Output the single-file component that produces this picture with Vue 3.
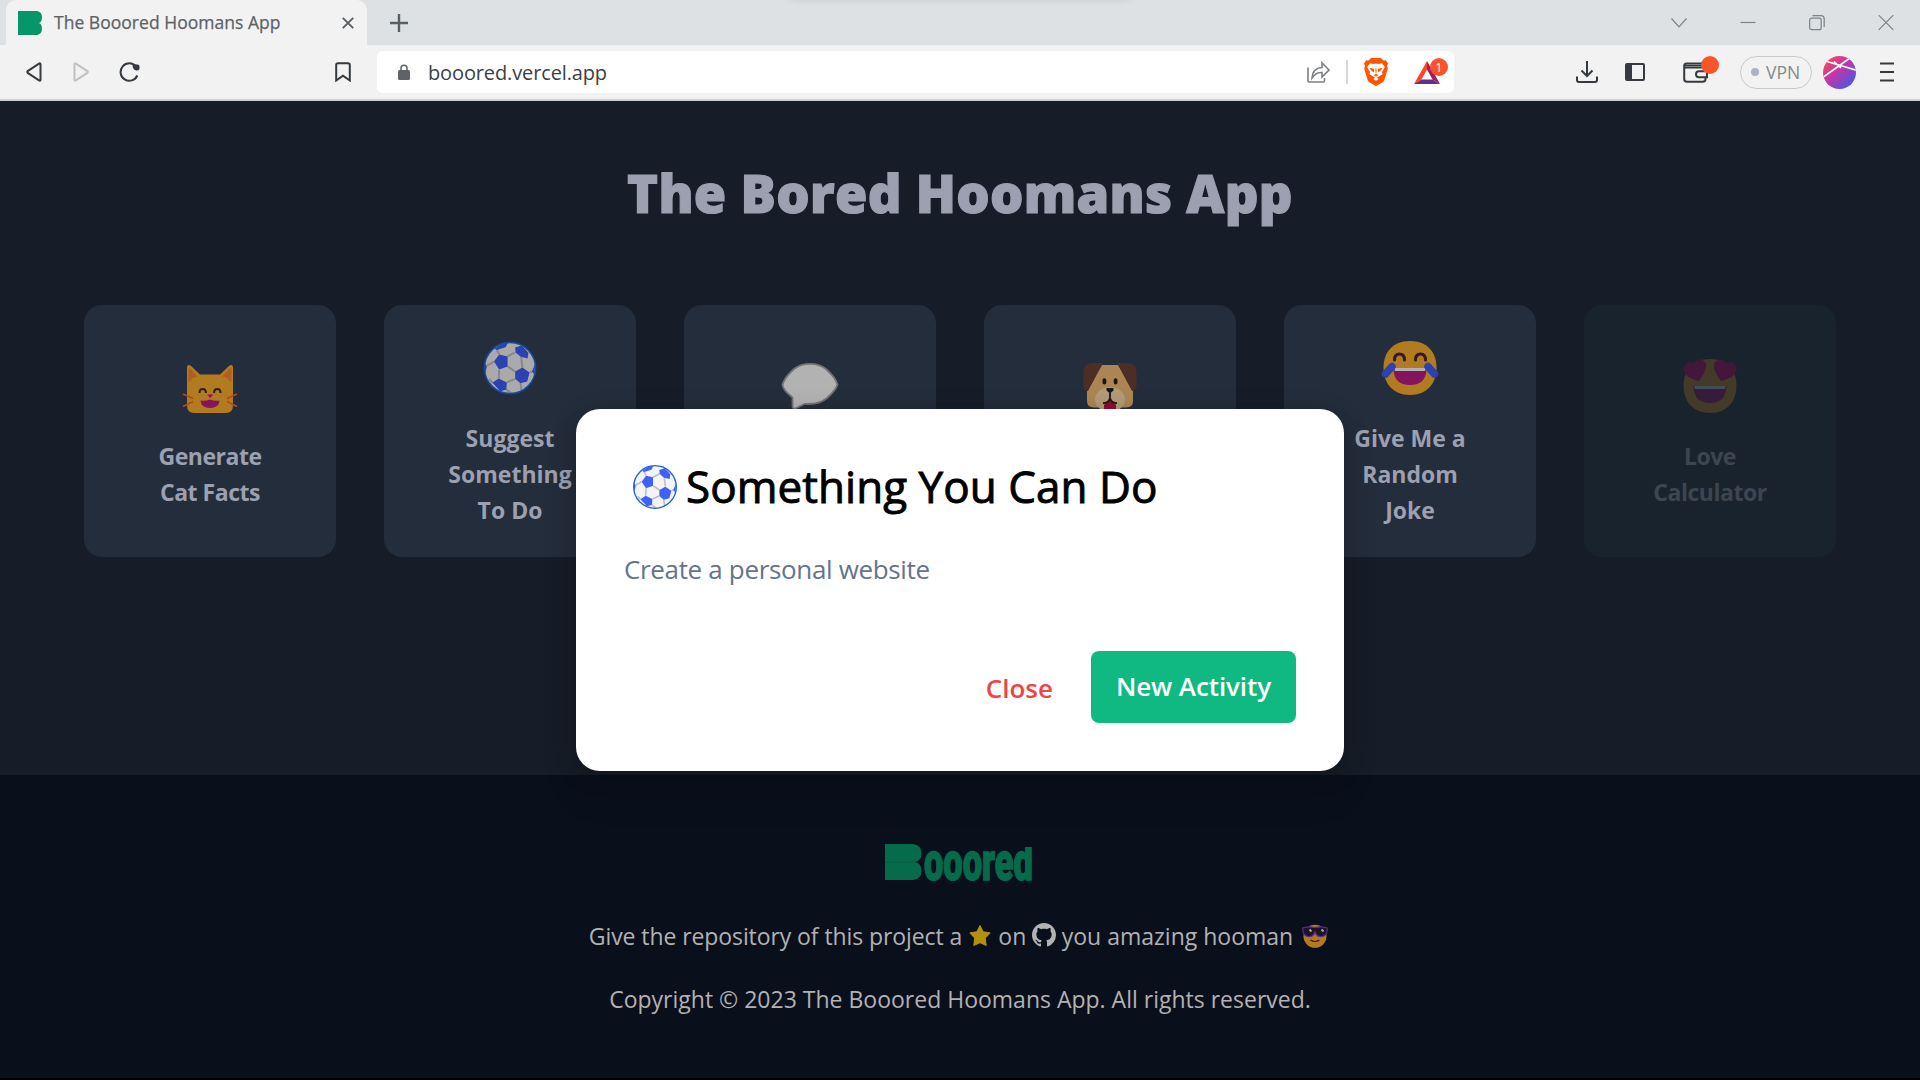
<script setup>
const cards = [
  { icon: 'cat', lines: ['Generate', 'Cat Facts'], tight: true },
  { icon: 'ball', lines: ['Suggest', 'Something', 'To Do'] },
  { icon: 'bubble', lines: [] },
  { icon: 'dog', lines: [] },
  { icon: 'joy', lines: ['Give Me a', 'Random', 'Joke'] },
  { icon: 'love', lines: ['Love', 'Calculator'], soon: true, tight: true },
]
</script>

<template>
  <div class="screen">
    <header class="browser">
      <div class="tabs">
        <div class="tab">
          <svg class="favicon" viewBox="0 0 24 24"><path d="M0 0h19q5 1 5 6t-3 6q3 1 3 6t-5 6H0z" fill="#059669" /></svg>
          <span class="tab-title">The Booored Hoomans App</span>
          <svg class="tab-x" viewBox="0 0 12 12"><path d="M.8.8l10.400 10.400M11.200.8L.8 11.200" stroke="#5a5f64" stroke-width="1.900" /></svg>
        </div>
        <svg class="plus" viewBox="0 0 18 18"><path d="M9 0v18M0 9h18" stroke="#5a5f64" stroke-width="2.400" /></svg>
        <span class="top-shade"></span>
        <div class="win">
          <svg viewBox="0 0 16 16"><path d="M.5 3.500L8 11.800 15.500 3.500" /></svg>
          <svg viewBox="0 0 16 16"><path d="M.5 7.500h15" /></svg>
          <svg viewBox="0 0 16 16"><rect x=".7" y="3.200" width="11.500" height="11.500" rx="2" /><path d="M3.500 .7H12a3.200 3.200 0 0 1 3.200 3.200V12" /></svg>
          <svg viewBox="0 0 16 16"><path d="M.7.2l14.600 14.600M15.300.2L.7 14.800" /></svg>
        </div>
      </div>
      <div class="toolbar">
        <svg class="i back" viewBox="0 0 16 20"><path d="M14.500 2.300v15.400q0 1.600-1.500.7L1.700 10.900q-1-.9 0-1.800L13 1.600q1.500-.9 1.500.7z" /></svg>
        <svg class="i fwd" viewBox="0 0 16 20"><path d="M1.500 2.300v15.400q0 1.600 1.500.7l11.300-7.500q1-.9 0-1.800L3 1.600Q1.500.7 1.500 2.300z" /></svg>
        <svg class="i reload" viewBox="0 0 21 20"><path d="M17 4.500A8.700 8.700 0 1 0 18.300 13.500" /><path d="M13.500 2.500h5q2 0 2 2V7q-1 2-3 1.500-4-.5-4-6z" fill="#343a40" stroke="none" /></svg>
        <svg class="i mark" viewBox="0 0 16 20"><path d="M1.200 3q0-1.800 1.800-1.800h10q1.800 0 1.800 1.800v15.500L8 13.800l-6.800 4.700z" /></svg>
        <div class="url">
          <svg class="lock" viewBox="0 0 12 16"><path d="M3 7V4.200a3 3 0 0 1 6 0V7" fill="none" stroke="#5f6368" stroke-width="1.500" /><rect y="6" width="12" height="10" rx="1.500" fill="#5f6368" /></svg>
          <span class="host">booored.vercel.app</span>
          <svg class="share" viewBox="0 0 23 22"><path d="M1 6.500V20q0 1 1 1h14.500q1 0 1-1v-3" /><path d="M5 17q.5-10 10-10.500V1.800L22 9l-7 7v-4.500Q9 11 5 17z" /></svg>
          <i class="sep"></i>
          <svg class="brave" viewBox="0 0 24 28"><path d="M7 0h10l2.500 2.600 2.300-.4L24 5.600 23 8l.8 2.500-3.400 11.400q-.6 1.700-2 2.700L12 28l-6.400-3.400q-1.400-1-2-2.700L.2 10.500 1 8 0 5.600l2.200-3.400 2.300.4z" fill="#ff5500" /><path d="M12 5.500l2.500.5 3.500-.8 2.800 3.800-1 2-1.800 3 .6 2.300-4.300 2.400-1.400 1.100 1.700 1.300L12 22.800l-2.600-1.700 1.700-1.300-1.400-1.100-4.300-2.400.6-2.300-1.800-3-1-2L6 5.200l3.500.8z" fill="#fff" /><path d="M5.500 10l3.800.5 1 1-.5 2.800-1.700-1zM18.500 10l-3.800.5-1 1 .5 2.800 1.700-1zM12 8l.6 4.500-.3 3h-.6l-.3-3zM9.500 17L12 16.100l2.500.9L12 18.500z" fill="#ff5500" /></svg>
          <div class="bat">
            <svg viewBox="0 0 26 23"><path d="M13 0L0 23l7.500-4.500L13 8.500z" fill="#ff4724" /><path d="M13 0v8.500l5.500 10L26 23z" fill="#9e1f63" /><path d="M0 23h26l-7.500-4.500h-11z" fill="#662d91" /></svg>
            <b>1</b>
          </div>
        </div>
        <div class="tools">
          <svg class="i dl" viewBox="0 0 22 22"><path d="M11 0v14.500M5.500 9.500L11 15l5.500-5.500M1 15.500V19q0 2 2 2h16q2 0 2-2v-3.500" /></svg>
          <svg class="i side" viewBox="0 0 20 18"><rect x="1" y="1" width="18" height="16" rx="1" /><path d="M1 1h6v16H1z" fill="#343a40" stroke="none" /></svg>
          <div class="wallet">
            <svg class="i" viewBox="0 0 25 21"><path d="M22.500 5V4q0-2.500-2.500-2.500H3.500Q1.200 1.500 1.200 4v13q0 2.800 2.800 2.800h15.700q2.800 0 2.800-2.800v-1.500M1.200 5.500h19q2.300 0 2.300 3" /><path d="M24 9.200h-8q-3 0-3 3t3 3h8z" /><path d="M2 3.500h18" stroke-width="1.500" /></svg>
            <b></b>
          </div>
          <div class="vpn"><i></i><span>VPN</span></div>
          <svg class="avatar" viewBox="0 0 33 33"><defs><linearGradient id="av" x1=".1" y1=".1" x2=".85" y2=".9"><stop offset="0" stop-color="#f5485f" /><stop offset=".45" stop-color="#c137a8" /><stop offset="1" stop-color="#4a58e4" /></linearGradient><clipPath id="avc"><circle cx="16.500" cy="16.500" r="16.500" /></clipPath></defs><g clip-path="url(#avc)"><path d="M0 0h33v33H0z" fill="url(#av)" /><path d="M4 5.500l30 9M-1 22L27 2M11 5.500l7 6.500" stroke="#fff" stroke-width="1.600" /></g></svg>
          <svg class="i menu" viewBox="0 0 14 20"><path d="M0 1.500h14M0 10h14M0 18.500h14" stroke-width="2.200" /></svg>
        </div>
      </div>
    </header>

    <main class="page">
      <h1>The Bored Hoomans App</h1>
      <div class="cards">
        <div v-for="c in cards" :key="c.icon" class="card" :class="{ soon: c.soon, tight: c.tight }">
          <svg v-if="c.icon === 'cat'" class="emoji" viewBox="0 0 60 60">
            <path d="M7 12q0-4 3.500-2.500L20 18.500h20l9.500-9Q53 8 53 12v37q0 8-7 8H14q-7 0-7-8z" fill="#b27b20" />
            <path d="M8.500 13q1-1.500 2.500 0l6.500 7.500q-6 1-7 5h-2zM51.500 13q-1-1.500-2.500 0l-6.500 7.500q6 1 7 5h2z" fill="#b25e20" />
            <path d="M19.500 37q0-4 3.200-4t3.200 4M34.100 37q0-4 3.200-4t3.200 4" fill="none" stroke="#321b28" stroke-width="2" />
            <path d="M27 38.500h6.500L30.200 42z" fill="#b2006c" />
            <path d="M20.500 44.500q5 .8 9.500-1 4.500 1.800 9.500 1Q39 52 30 52t-9.500-7.500z" fill="#83145d" />
            <path d="M3 38l10 4.500M3 50.500l10-5M57 38l-10 4.500M57 50.500l-10-5" stroke="#b34a1c" stroke-width="1.600" />
          </svg>
          <svg v-else-if="c.icon === 'bubble'" class="emoji" viewBox="0 0 60 60"><path d="M12.500 41.500Q2.500 33.500 2.500 28.500 4.500 21.500 14 13 20.500 7.800 30 7.800T46 13q9.500 8.500 11.500 15.500-1.500 5.500-10.500 13.500-8 7-22 5.800l-9.500 4.700q-3 .5-3-2.500z" fill="#b2b2b2" stroke="#737373" stroke-width="1.800" /></svg>
          <svg v-else-if="c.icon === 'dog'" class="emoji" viewBox="0 0 60 60">
            <path d="M22 9h16l15 24v12q0 6.500-7 6.500H14q-7 0-7-6.500V33z" fill="#ab8654" />
            <path d="M12 7h11L8 35Q3.500 35 3.500 31V17Q3.500 7 12 7zM48 7H37l15 28q4.500 0 4.500-4V17Q56.500 7 48 7z" fill="#4c2e26" />
            <ellipse cx="30" cy="43.500" rx="15" ry="12.500" fill="#b29b76" />
            <rect x="22.500" y="22.200" width="3.800" height="6.200" rx="1.900" fill="#191919" /><rect x="33.700" y="22.200" width="3.800" height="6.200" rx="1.900" fill="#191919" />
            <path d="M26.500 32h7v2.500L30 37.500l-3.500-3z" fill="#191919" /><path d="M24 49l6-6.500 6 6.500v9H24z" fill="#930832" />
            <path d="M30 37v5q-1.500 5.500-7 5M30 42q1.500 5.500 7 5" fill="none" stroke="#191919" stroke-width="1.800" />
          </svg>
          <svg v-else-if="c.icon === 'joy'" class="emoji" viewBox="0 0 60 60">
            <path d="M30 3c18 0 26.500 12 26.500 27S47 57 30 57 3.500 45 3.500 30 12 3 30 3z" fill="#b27b20" />
            <path d="M14.500 22q0-6 5-6t5 6M35.500 22q0-6 5-6t5 6" fill="none" stroke="#321b28" stroke-width="3" stroke-linecap="round" />
            <path d="M13.500 31h33Q46 47 30 47T13.500 31z" fill="#83145d" /><path d="M14.500 30h31v1.500q0 1.500-1.500 1.500H16q-1.500 0-1.500-1.500z" fill="#b2b2b2" />
            <path d="M12 28.500L5.500 36M48 28.500l6.500 7.500" stroke="#2c41b2" stroke-width="7.500" stroke-linecap="round" />
          </svg>
          <svg v-else-if="c.icon === 'love'" class="emoji" viewBox="0 0 60 60">
            <path d="M30 3c18 0 26.500 12 26.500 27S47 57 30 57 3.500 45 3.500 30 12 3 30 3z" fill="#443a2a" />
            <path d="M13.500 30h33Q46 47 30 47T13.500 30z" fill="#371b3b" /><path d="M14.500 30h31v1.500q0 1.500-1.500 1.500H16q-1.500 0-1.500-1.500z" fill="#444d55" />
            <path d="M19 25Q3 21 3.500 12.500 5 5 13.500 7 18 1 24 5q6 5-5 20z" fill="#43163b" /><path d="M41 25q16-4 15.500-12.500Q55 5 46.500 7 42 1 36 5q-6 5 5 20z" fill="#43163b" />
          </svg>
          <svg v-else class="emoji ball" viewBox="-9 -9 150 150">
            <circle class="w" cx="66" cy="66" r="64" />
            <path class="s" d="M60 37l19-10M60 62l19 13M39 32l-6-12M26 50L5 62M39 70l-1 22M58 102l21-9M94 38l3 27M115 77l12-4M92 104l3 18M57 120l12 9M22 103l-8-10" />
            <path class="p" d="M26 50l13-18 21 5v25l-21 8zM79 75l18-10 18 12-6 23-17 4-13-11zM79 15l16-5 17 18-2 14-17-4-13-11zM22 103l16-11 20 10-1 18-15 4zM28 18Q42 5 61 3l-6 11-22 7zM129 55l-8 20 6 8zM3 52l5 12-5 18z" />
            <circle class="r" cx="66" cy="66" r="64" />
          </svg>
          <p class="label"><template v-for="l in c.lines" :key="l"><span>{{ l }}</span><br></template></p>
        </div>
      </div>
    </main>

    <footer class="foot">
      <div class="logo">
        <svg class="logo-b" viewBox="0 0 37 36"><path d="M0 0h28q8.500 1 8.500 9T30 18q6.500 1 6.500 9T28 36H0z" fill="#056b4b" /><path d="M0 18.300h31" stroke="#045a42" stroke-width=".8" /></svg>
        <svg class="logo-t" viewBox="0 0 109 34"><text x="0" y="32.500" textLength="109" lengthAdjust="spacingAndGlyphs">ooored</text></svg>
      </div>
      <p class="line">
        <span class="give">Give the repository of this project a</span>
        <svg class="star" viewBox="0 0 22 21"><path d="M11 .5l3.200 6.200 7 1.200-4.900 5.200.9 7.400L11 17.700l-6.200 2.800.9-7.400L.8 7.900l7-1.200z" fill="#b29010" stroke="#b29010" stroke-linejoin="round" /></svg>
        <span class="on">on</span>
        <svg class="gh" viewBox="0 0 16 16"><path fill="#b2b2b2" d="M8 0C3.580 0 0 3.580 0 8c0 3.540 2.290 6.530 5.470 7.590.4.070.55-.17.55-.38 0-.19-.01-.82-.01-1.490-2.010.37-2.530-.49-2.690-.94-.09-.23-.48-.94-.82-1.130-.28-.15-.68-.52-.01-.53.63-.01 1.080.58 1.230.82.72 1.210 1.870.87 2.330.66.070-.52.28-.87.51-1.070-1.780-.2-3.640-.89-3.640-3.950 0-.87.31-1.590.82-2.150-.08-.2-.36-1.020.08-2.120 0 0 .67-.21 2.200.82.64-.18 1.320-.27 2-.27s1.360.09 2 .27c1.530-1.040 2.200-.82 2.200-.82.44 1.100.16 1.920.08 2.120.51.56.82 1.270.82 2.150 0 3.070-1.870 3.750-3.650 3.950.29.25.54.73.54 1.480 0 1.070-.01 1.930-.01 2.200 0 .21.150.46.550.38A8.010 8.010 0 0 0 16 8c0-4.420-3.580-8-8-8z" /></svg>
        <span class="you">you amazing hooman</span>
        <svg class="cool" viewBox="0 0 26 24"><circle cx="13" cy="12.300" r="11.500" fill="#b27b20" /><path d="M.8 4q6-1.800 12.200-.5Q19 2.200 25.200 4q.6 8-6 8.700-5 .3-6.200-5.200-1.200 5.500-6.200 5.200Q.2 12 .8 4z" fill="#1f1228" stroke="#54308a" stroke-width="1.200" /><path d="M7.500 5.500l2 2M19.500 5.500l2 2" stroke="#b0a8ba" stroke-width="1.800" /><path d="M8.500 16q4.500 3 9 0" fill="none" stroke="#321b28" stroke-width="1.200" /></svg>
      </p>
      <p class="line copy">Copyright © 2023 The Booored Hoomans App. All rights reserved.</p>
    </footer>

    <section class="modal">
      <h2>
        <svg class="ball big" viewBox="0 0 132 132">
          <circle class="w" cx="66" cy="66" r="64" />
          <path class="s" d="M60 37l19-10M60 62l19 13M39 32l-6-12M26 50L5 62M39 70l-1 22M58 102l21-9M94 38l3 27M115 77l12-4M92 104l3 18M57 120l12 9M22 103l-8-10" />
          <path class="p" d="M26 50l13-18 21 5v25l-21 8zM79 75l18-10 18 12-6 23-17 4-13-11zM79 15l16-5 17 18-2 14-17-4-13-11zM22 103l16-11 20 10-1 18-15 4zM28 18Q42 5 61 3l-6 11-22 7zM129 55l-8 20 6 8zM3 52l5 12-5 18z" />
          <circle class="r" cx="66" cy="66" r="64" />
        </svg>
        <span>Something You Can Do</span>
      </h2>
      <p class="msg">Create a personal website</p>
      <div class="acts">
        <button class="close">Close</button>
        <button class="new">New Activity</button>
      </div>
    </section>
  </div>
</template>

<style>
body { margin: 0; background: #000; }
</style>

<style scoped>
.screen { position: relative; width: 1920px; height: 1080px; overflow: hidden; background: #000; font-family: "Open Sans", "Noto Sans", sans-serif; display: flex; flex-direction: column; }
svg { display: block; flex: none; }
p, h1, h2 { margin: 0; }
span { white-space: nowrap; }
.browser { height: 101px; box-sizing: border-box; background: #f2f2f2; border-bottom: 2px solid #cdd2d5; }
.tabs { height: 45px; background: #dde1e4; display: flex; align-items: center; position: relative; }
.tab { width: 361px; height: 45px; margin-left: 6px; background: #f2f2f2; border-radius: 10px 10px 0 0; display: flex; align-items: center; box-sizing: border-box; padding: 0 12px; }
.favicon { width: 24px; height: 24px; }
.tab-title { margin-left: 12px; font-size: 17.5px; letter-spacing: .03px; color: #5d6267; -webkit-text-stroke: .25px #5d6267; flex: 1; padding-bottom: 1px; }
.tab-x { width: 12px; height: 12px; margin-right: 1px; }
.plus { width: 18px; height: 18px; margin-left: 23px; }
.top-shade { position: absolute; left: 790px; top: -6px; width: 340px; height: 4px; box-shadow: 0 0 8px rgba(0, 0, 0, .2); }
.win { margin-left: auto; margin-right: 26px; display: flex; gap: 53px; }
.win svg { width: 16px; height: 16px; fill: none; stroke: #7d8286; stroke-width: 1.2; }
.toolbar { height: 54px; display: flex; align-items: center; }
.i { fill: none; stroke: #343a40; stroke-width: 2; }
.back { width: 16px; height: 20px; margin-left: 26px; }
.fwd { width: 16px; height: 20px; margin-left: 31px; stroke: #bfc1c3; }
.reload { width: 21px; height: 20px; margin-left: 30px; }
.mark { width: 16px; height: 20px; margin-left: 195px; }
.url { width: 1077px; height: 42px; background: #fff; border-radius: 6px; margin-left: 26px; display: flex; align-items: center; box-sizing: border-box; padding-left: 21px; }
.lock { width: 12px; height: 16px; }
.host { font-size: 20px; letter-spacing: -.13px; color: #3b3f44; margin-left: 18px; flex: 1; }
.share { width: 23px; height: 22px; fill: none; stroke: #7c8084; stroke-width: 1.6; }
.sep { width: 2px; height: 24px; background: #d5d7d9; margin: 0 16px; }
.brave { width: 24px; height: 28px; }
.bat { position: relative; margin: 0 14px 0 26px; }
.bat svg { width: 26px; height: 23px; }
.bat b { position: absolute; left: 16px; top: -3px; width: 18px; height: 18px; border-radius: 9px; background: #fb542b; color: #fff; font-size: 12px; font-weight: 400; line-height: 19px; text-align: center; }
.tools { flex: 1; display: flex; align-items: center; padding-left: 122px; }
.dl { width: 22px; height: 22px; }
.side { width: 20px; height: 18px; margin-left: 27px; }
.wallet { position: relative; margin-left: 38px; }
.wallet svg { width: 25px; height: 21px; }
.wallet b { position: absolute; left: 18px; top: -6px; width: 18px; height: 18px; border-radius: 9px; background: #fb542b; }
.vpn { margin-left: 32px; width: 72px; height: 33px; box-sizing: border-box; border: 1px solid #c6cace; border-radius: 17px; display: flex; align-items: center; padding-left: 10px; font-size: 17.5px; color: #84898f; }
.vpn i { width: 8px; height: 8px; border-radius: 4px; background: #aeb1c4; margin-right: 7px; }
.avatar { width: 33px; height: 33px; margin-left: 11px; }
.menu { width: 14px; height: 20px; margin-left: 24px; }

.page { height: 674px; background: #161d28; }
h1 { box-sizing: border-box; padding-top: 57px; height: 204px; line-height: 70px; text-align: center; font-size: 52.5px; font-weight: 800; letter-spacing: .3px; color: #9ca0b0; -webkit-text-stroke: 1.2px #9ca0b0; }
.cards { display: flex; gap: 48px; padding: 0 84px; }
.card { width: 252px; height: 252px; border-radius: 18px; background: #242d3b; display: flex; flex-direction: column; align-items: center; justify-content: center; }
.emoji { width: 60px; height: 60px; margin: 4px 0 22px; }
.label { min-height: 72px; text-align: center; font-size: 23px; font-weight: 700; line-height: 36px; color: #9ca0b0; }
.tight .label { letter-spacing: -.48px; }
.soon { background: #19232d; }
.soon .label { color: #3d4650; }
.ball { --w: #aaa; --s: #888; --p: #2c41b2; --r: #14499c; }
.ball.big { --w: #f4f4f4; --s: #c0c0c0; --p: #3f5fff; --r: #1b62db; width: 44px; height: 44px; }
.w { fill: var(--w); }
.s { fill: none; stroke: var(--s); stroke-width: 5; }
.p { fill: var(--p); }
.r { fill: none; stroke: var(--r); stroke-width: 4; }

.foot { height: 303px; background: #0a0f1c; display: flex; flex-direction: column; align-items: center; }
.logo { display: flex; margin: 69px 2px 0 0; }
.logo-b { width: 37px; height: 36px; }
.logo-t { width: 109px; height: 34px; margin: 3px 0 0 2px; overflow: visible; clip-path: inset(0 -2px 0 -2px); }
.logo-t text { font: 900 51px Roboto, sans-serif; fill: #056b4b; stroke: #056b4b; stroke-width: 1.4; }
.line { display: flex; align-items: center; font-size: 23px; line-height: 36px; color: #b2b2b2; margin-top: 37px; }
.give { letter-spacing: -.088px; margin-left: -3px; }
.star { width: 22px; height: 21px; margin: 0 7px 0 7px; position: relative; top: -1px; }
.on { letter-spacing: .3px; }
.gh { width: 24px; height: 24px; margin: 0 6px 0 5px; position: relative; top: -1px; }
.cool { width: 26px; height: 24px; margin-left: 9px; }
.copy { margin-top: 27px; }

.modal { position: absolute; left: 576px; top: 409px; width: 768px; height: 362px; box-sizing: border-box; padding: 48px; background: #fff; border-radius: 24px; box-shadow: 0 24px 36px rgba(0, 0, 0, .1), 0 4px 24px rgba(0, 0, 0, .18); }
h2 { display: flex; align-items: center; height: 60px; line-height: 60px; font-size: 44px; font-weight: 400; letter-spacing: .05px; color: #000; -webkit-text-stroke: .9px #000; padding-left: 9px; }
h2 span { margin: -2px 0 0 9px; }
.msg { margin-top: 31px; line-height: 42px; font-size: 26px; letter-spacing: -.34px; color: #64748b; }
.acts { margin-top: 61px; display: flex; justify-content: flex-end; align-items: center; }
button { border: 0; background: none; padding: 0; font-family: inherit; font-size: 26px; font-weight: 600; }
.close { color: #ef4444; margin-right: 38px; padding-top: 1px; }
.new { width: 205px; height: 72px; border-radius: 8px; background: #10b981; color: #fff; padding-bottom: 3px; letter-spacing: -.1px; }
</style>
